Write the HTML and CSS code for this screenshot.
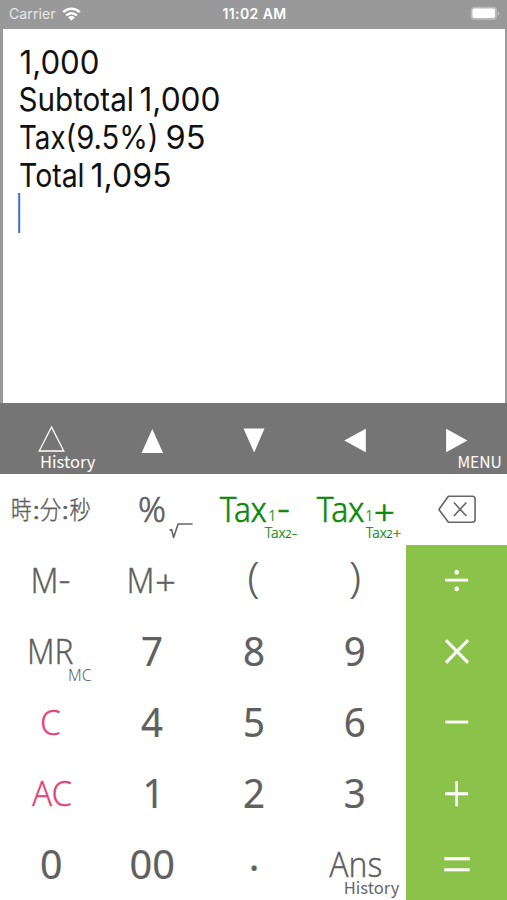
FILE: index.html
```html
<!DOCTYPE html>
<html lang="en">
<head>
<meta charset="utf-8">
<title>Calculator</title>
<link rel="stylesheet" href="styles.css">
</head>
<body>
<div class="app">
  <header class="status">
    <div class="carrier">Carrier
      <svg class="wifi" viewBox="0 0 18 14"><path d="M.8 5.2a11.3 11.3 0 0 1 16.4 0M3.7 8.5a7.2 7.2 0 0 1 10.6 0" fill="none" stroke="#fff" stroke-width="2.5"/><path d="M9 13.7 5.7 10.5a4.6 4.6 0 0 1 6.6 0z" fill="#fff"/></svg>
    </div>
    <div class="time">11:02 AM</div>
    <svg class="battery" viewBox="0 0 30 15"><rect x=".7" y=".7" width="26.5" height="13.3" rx="4" fill="#b9b9b9"/><rect x="2.5" y="2.5" width="22.5" height="9.5" rx="2" fill="#fff"/><path d="M28 5v5q2-2.5 0-5" fill="#ccc"/></svg>
  </header>
  <main class="display">
    <svg class="tape" viewBox="3 29 502 374">
      <text x="19.5" y="73.6" textLength="80">1,000</text>
      <text x="18.5" y="111.4" textLength="115.5">Subtotal</text><text x="139.5" y="111.4" textLength="81">1,000</text>
      <text x="19" y="149.2" textLength="46.5">Tax</text><text x="65.5" y="149.2" textLength="93">(9.5%)</text><text x="165.5" y="149.2" textLength="40">95</text>
      <text x="19" y="187" textLength="65.5">Total</text><text x="90.5" y="187" textLength="81">1,095</text>
      <path class="caret" d="M19.2 193v40"/>
    </svg>
  </main>
  <nav class="row toolbar">
    <svg viewBox="0 403 101.4 71"><path d="M51.5 427 39.2 451H63.8z" fill="none" stroke="#fff" stroke-width="1.3"/><text class="small" x="40" y="468" textLength="55.5">History</text></svg>
    <svg viewBox="101.4 403 101.4 71"><path d="M152.7 429 142 453h21.5z"/></svg>
    <svg viewBox="202.8 403 101.4 71"><path d="M243.3 428.5h21L254 452.5z"/></svg>
    <svg viewBox="304.2 403 101.4 71"><path d="M344.5 440.5 366 428.7V452.3z"/></svg>
    <svg viewBox="405.6 403 101.4 71"><path d="M467 440.5 445.7 428.7V452.3z"/><text class="small" x="457" y="468" textLength="44.5">MENU</text></svg>
  </nav>
  <section class="keypad">
    <svg viewBox="0 474 101.4 71"><text class="jp" x="11" y="519.5" textLength="20.5">時</text><text class="jp" x="32.5" y="519.5" textLength="7.5">:</text><text class="jp" x="40" y="519.5" textLength="21">分</text><text class="jp" x="61.5" y="519.5" textLength="7.5">:</text><text class="jp" x="69.5" y="519.5" textLength="21">秒</text></svg>
    <svg viewBox="101.4 474 101.4 71"><text class="fn firm" x="138.5" y="522" textLength="28">%</text><path class="line" d="m170 530.5 2-1 2 8 4.5-13.5h14.5"/></svg>
    <svg class="green" viewBox="202.8 474 101.4 71"><text class="fn firm" x="219.5" y="522" textLength="47">Tax</text><text class="sub" x="268" y="521" textLength="8">1</text><text class="fn firm" x="277" y="521.5" textLength="12.5">-</text><text class="tiny" x="264.5" y="538" textLength="21">Tax</text><text class="two" x="285" y="538" textLength="6.5">2</text><text class="tiny" x="291.5" y="538" textLength="5.5">-</text></svg>
    <svg class="green" viewBox="304.2 474 101.4 71"><text class="fn firm" x="317" y="522" textLength="47.5">Tax</text><text class="sub" x="365.5" y="521" textLength="8">1</text><text class="fn firm" x="374" y="525" textLength="21">+</text><text class="tiny" x="366" y="538" textLength="21">Tax</text><text class="two" x="386.5" y="538" textLength="6.5">2</text><text class="tiny" x="393" y="539" textLength="8.5">+</text></svg>
    <svg viewBox="405.6 474 101.4 71"><path class="line" d="M448 496.2h24q2.7 0 2.7 2.7v20.6q0 2.7-2.7 2.7h-24L438.5 509.5zM453.5 502.5l12.5 13.5M466 502.5l-12.5 13.5"/></svg>

    <svg viewBox="0 545 101.4 71"><text class="fn" x="30.5" y="593" textLength="28">M</text><text class="fn" x="58.5" y="592" textLength="12">-</text></svg>
    <svg viewBox="101.4 545 101.4 71"><text class="fn" x="127" y="593" textLength="28">M</text><text class="fn" x="155.5" y="595.5" textLength="21">+</text></svg>
    <svg viewBox="202.8 545 101.4 71"><text class="paren" x="247" y="592.5" textLength="12.5">(</text></svg>
    <svg viewBox="304.2 545 101.4 71"><text class="paren" x="349" y="592.5" textLength="12.5">)</text></svg>
    <svg class="op" viewBox="405.6 545 101.4 71"><text x="442.5" y="597.5" textLength="27.5">÷</text></svg>

    <svg viewBox="0 616 101.4 71"><text class="fn" x="27" y="664" textLength="46.5">MR</text><text class="mc" x="68" y="681" textLength="23.5">MC</text></svg>
    <svg viewBox="101.4 616 101.4 71"><text class="num" x="141.5" y="666" textLength="22">7</text></svg>
    <svg viewBox="202.8 616 101.4 71"><text class="num" x="242.9" y="666" textLength="22">8</text></svg>
    <svg viewBox="304.2 616 101.4 71"><text class="num" x="344" y="666" textLength="22">9</text></svg>
    <svg class="op" viewBox="405.6 616 101.4 71"><text class="times" x="441" y="671.5" textLength="31">×</text></svg>

    <svg class="pink" viewBox="0 687 101.4 71"><text class="fn" x="40" y="735" textLength="21">C</text></svg>
    <svg viewBox="101.4 687 101.4 71"><text class="num" x="141.5" y="737" textLength="22">4</text></svg>
    <svg viewBox="202.8 687 101.4 71"><text class="num" x="242.9" y="737" textLength="22">5</text></svg>
    <svg viewBox="304.2 687 101.4 71"><text class="num" x="344" y="737" textLength="22">6</text></svg>
    <svg class="op" viewBox="405.6 687 101.4 71"><text x="442.5" y="739.5" textLength="27.5">−</text></svg>

    <svg class="pink" viewBox="0 758 101.4 71"><text class="fn" x="32" y="806" textLength="40">AC</text></svg>
    <svg viewBox="101.4 758 101.4 71"><text class="num" x="143" y="808" textLength="22">1</text></svg>
    <svg viewBox="202.8 758 101.4 71"><text class="num" x="242.9" y="808" textLength="22">2</text></svg>
    <svg viewBox="304.2 758 101.4 71"><text class="num" x="344" y="808" textLength="22">3</text></svg>
    <svg class="op" viewBox="405.6 758 101.4 71"><text class="plus" x="442.5" y="812" textLength="27.5">+</text></svg>

    <svg viewBox="0 829 101.4 71"><text class="num" x="40" y="879" textLength="22.5">0</text></svg>
    <svg viewBox="101.4 829 101.4 71"><text class="num" x="130" y="879" textLength="45.5">00</text></svg>
    <svg viewBox="202.8 829 101.4 71"><text class="num" x="248.5" y="871" textLength="10.7">.</text></svg>
    <svg viewBox="304.2 829 101.4 71"><text class="fn" x="329.5" y="877" textLength="53">Ans</text><text class="small grey" x="344" y="894" textLength="55.5">History</text></svg>
    <svg class="op" viewBox="405.6 829 101.4 71"><text class="equals" x="441" y="883.5" textLength="31">=</text></svg>
  </section>
</div>
<script src="fit.js"></script>
</body>
</html>
```
FILE: fit.js
```js
document.querySelectorAll('text').forEach(function (label) {
  label.setAttribute('lengthAdjust', 'spacingAndGlyphs');
});
```
FILE: styles.css
```css
* { box-sizing: border-box; }
body { margin: 0; background: #fff; }
svg { display: block; }
.app { width: 507px; height: 900px; display: grid; grid-template-rows: 29px 374px 71px 426px; background: #999; overflow: hidden; }
.status { display: grid; grid-template-columns: 1fr 1fr 1fr; align-items: center; padding: 0 7px 2px 9px; color: #fff; font: 14px Inter, sans-serif; }
.carrier { display: flex; align-items: center; gap: 6px; color: #e8e8e8; letter-spacing: .1px; }
.wifi { width: 19px; height: 14px; }
.time { text-align: center; font-size: 14px; font-weight: 600; letter-spacing: .4px; white-space: nowrap; }
.battery { width: 30px; height: 15px; justify-self: end; }
.display { margin: 0 2px 0 3px; background: #fff; }
.tape { width: 502px; height: 374px; fill: #111; }
.tape text { font: 32px Inter, sans-serif; }
.caret { fill: none; stroke: #4169e1; stroke-width: 2; }
.row, .keypad { display: grid; grid-template-columns: repeat(5, 101.4px); }
.row svg, .keypad svg { width: 101.4px; height: 71px; }
.toolbar { background: #757575; fill: #fff; }
.keypad { background: #fff; fill: #606060; }
text { font-family: "Noto Sans", sans-serif; }
.small { font-size: 16.5px; font-family: "Noto Sans CJK JP", sans-serif; }
.tiny { font-size: 14px; font-weight: 300; stroke: #0a8a0a; stroke-width: .25; }
.two { font-size: 11.5px; }
.sub { font-size: 14px; font-weight: 300; stroke: #0a8a0a; stroke-width: .2; }
.grey { fill: #666; }
.jp { font: 300 25px "Noto Sans CJK JP", sans-serif; stroke: #606060; stroke-width: .45; }
.fn { font-size: 35px; font-weight: 300; stroke: #606060; stroke-width: .3; }
.mc { font-size: 17px; font-weight: 300; }
.num { font-size: 40px; font-weight: 400; stroke: #606060; stroke-width: .2; }
.firm { stroke-width: .6; }
.green { fill: #0a8a0a; }
.green .fn { stroke: #0a8a0a; }
.pink { fill: #e0457b; }
.pink .fn { stroke: #e0457b; }
.line { fill: none; stroke: #666; stroke-linejoin: round; stroke-width: 1.6; }
.paren { font-size: 42px; font-weight: 300; }
.op { background: #8bc34a; fill: #fff; }
.op text { font-size: 48px; font-weight: 300; stroke: #fff; stroke-width: .3; }
.op .times { font-size: 56px; }
.op .plus { font-size: 52px; }
.op .equals { font-size: 54px; }
```
